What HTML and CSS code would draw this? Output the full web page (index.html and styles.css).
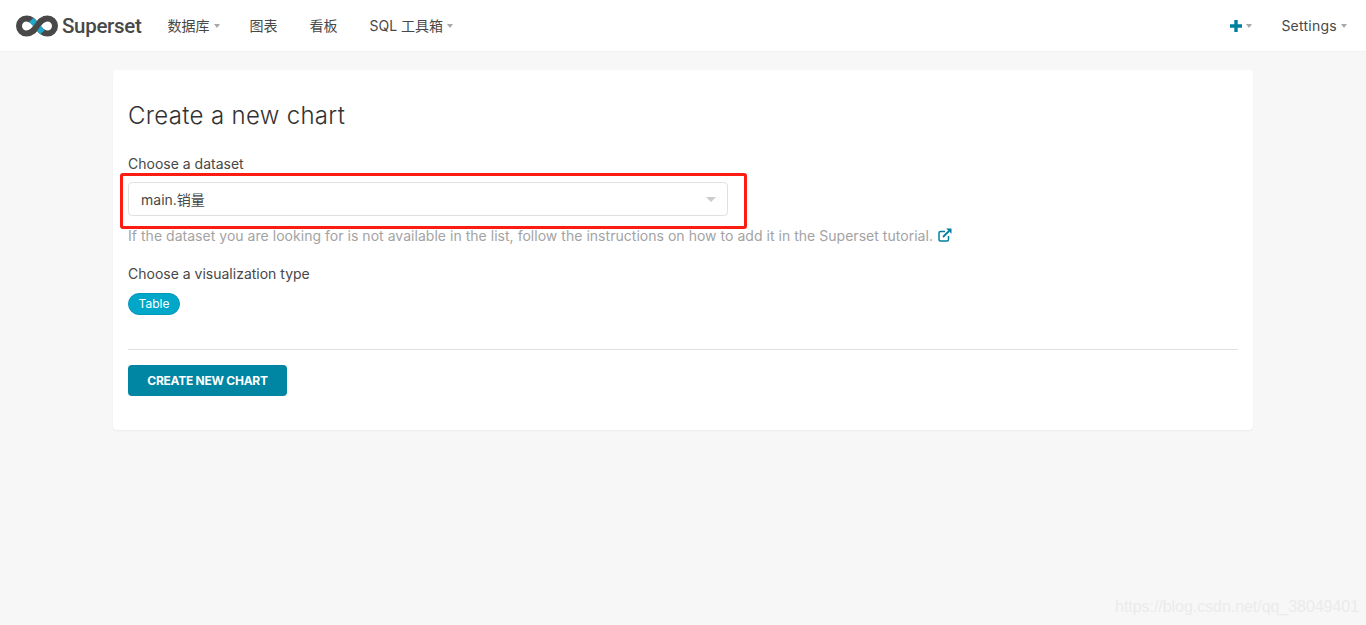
FILE: index.html
```html
<!DOCTYPE html>
<html lang="zh">
<head>
<meta charset="utf-8">
<title>Create a new chart</title>
<link rel="stylesheet" href="styles.css">
</head>
<body>
<header class="navbar">
  <a class="brand" href="#">
    <svg class="logo" width="42" height="22" viewBox="0 0 42 22" aria-hidden="true">
      <path d="M21 11 C17.500 6 15 3.500 10.500 3.500 A7.500 7.500 0 0 0 10.500 18.500 C15 18.500 17.500 16 21 11 C24.500 6 27 3.500 31.500 3.500 A7.500 7.500 0 0 1 31.500 18.500 C27 18.500 24.500 16 21 11 Z" fill="none" stroke="#484848" stroke-width="6"/>
      <path d="M15.500 4.800 L26.500 17.200" fill="none" stroke="#20a7c9" stroke-width="6"/>
      <path d="M16.500 17 L25.500 5" fill="none" stroke="#484848" stroke-width="6"/>
    </svg>
    <span class="brand-name">Superset</span>
  </a>
  <nav class="menu">
    <a class="menu-item" href="#">数据库<span class="caret"></span></a>
    <a class="menu-item" href="#">图表</a>
    <a class="menu-item" href="#">看板</a>
    <a class="menu-item" href="#">SQL 工具箱<span class="caret"></span></a>
  </nav>
  <nav class="menu-right">
    <a class="menu-item plus" href="#">
      <svg width="12" height="12" viewBox="0 0 12 12" aria-hidden="true"><path d="M0 6H12M6 0V12" stroke="#00809f" stroke-width="3.400"/></svg><span class="caret"></span>
    </a>
    <a class="menu-item settings" href="#">Settings<span class="caret"></span></a>
  </nav>
</header>

<main class="page">
  <section class="card">
    <h1 class="title">Create a new chart</h1>
    <div class="field">
      <label class="label">Choose a dataset</label>
      <div class="select">
        <span class="select-value">main.销量</span>
        <span class="select-arrow"></span>
        <div class="annotation"></div>
      </div>
      <p class="help">If the dataset you are looking for is not available in the list, follow the instructions on how to add it in the Superset tutorial.
        <svg class="ext" width="14" height="14" viewBox="0 0 14 14" aria-hidden="true">
          <path d="M10.500 8V11.500A1.500 1.500 0 0 1 9 13H2.500A1.500 1.500 0 0 1 1 11.500V5A1.500 1.500 0 0 1 2.500 3.500H7" fill="none" stroke="#00809f" stroke-width="1.500"/>
          <path d="M5 9L11 3" fill="none" stroke="#00809f" stroke-width="1.800"/>
          <path d="M8.200 0.500H13.500V5.800Z" fill="#00809f"/>
        </svg>
      </p>
    </div>
    <div class="field viz">
      <label class="label">Choose a visualization type</label>
      <div class="pill">Table</div>
    </div>
    <hr class="rule">
    <button class="btn" type="button">CREATE NEW CHART</button>
  </section>
</main>
<div class="watermark">https://blog.csdn.net/qq_38049401</div>
</body>
</html>
```
FILE: styles.css
```css
* { box-sizing: border-box; }
html, body { height: 100%; }
body {
  margin: 0;
  background: #f7f7f7;
  color: #484848;
  font-family: Inter, "Noto Sans CJK SC", sans-serif;
  font-size: 14px;
  line-height: 20px;
  overflow: hidden;
  position: relative;
}
a { color: inherit; text-decoration: none; }
.navbar {
  display: flex;
  align-items: center;
  height: 52px;
  background: #fff;
  border-bottom: 1px solid #f2f2f2;
  padding: 0 19px 0 16px;
}
.brand { display: flex; align-items: center; }
.logo { display: block; }
.brand-name {
  margin-left: 4px;
  font-size: 20.5px;
  font-weight: 500;
  font-family: Roboto, sans-serif;
  color: #484848;
  letter-spacing: -0.3px;
}
.menu { display: flex; gap: 32px; margin-left: 26px; }
.menu-right { display: flex; align-items: center; gap: 29px; margin-left: auto; }
.menu-item { display: flex; align-items: center; white-space: nowrap; color: #484848; }
.settings { letter-spacing: 0.25px; }
.caret {
  width: 0;
  height: 0;
  margin-left: 4px;
  margin-right: -2px;
  border-left: 3px solid transparent;
  border-right: 3px solid transparent;
  border-top: 4px solid #a8a8a8;
}
.menu-right .caret { margin-right: 0; }
.page { padding: 18px 113px 0; }
.card {
  height: 360px;
  background: #fff;
  border-radius: 4px;
  padding: 15px;
  box-shadow: 0 1px 2px rgba(0, 0, 0, 0.05);
}
.title {
  margin: 18px 0 0;
  font-size: 24px;
  line-height: 26px;
  font-weight: 300;
  letter-spacing: 0.32px;
  color: #323232;
}
.field { margin-top: 25px; }
.label { display: block; color: #484848; }
.select {
  position: relative;
  display: flex;
  align-items: center;
  justify-content: space-between;
  width: 600px;
  height: 34px;
  margin-top: 8px;
  padding: 0 12px;
  border: 1px solid #e0e0e0;
  border-radius: 4px;
  background: #fff;
}
.select-value { padding-top: 1px; }
.select-arrow {
  width: 0;
  height: 0;
  margin-right: -1px;
  border-left: 5px solid transparent;
  border-right: 5px solid transparent;
  border-top: 5px solid #ccc;
}
.annotation {
  position: absolute;
  left: -9px;
  top: -10px;
  width: 627px;
  height: 56px;
  border: 3px solid #fb1c12;
  border-radius: 3px;
  pointer-events: none;
}
.help {
  margin: 10px 0 0;
  color: #a3a3a3;
  letter-spacing: 0.03px;
}
.ext { vertical-align: -1px; margin-left: 1px; }
.viz { margin-top: 18px; }
.pill {
  width: 52px;
  height: 22px;
  margin-top: 9px;
  border: 1px solid #0098b8;
  border-radius: 11px;
  background: #00a7c9;
  color: #fff;
  font-size: 12px;
  line-height: 20px;
  text-align: center;
}
.rule {
  height: 1px;
  margin: 34px 0 15px;
  border: 0;
  background: #e0e0e0;
}
.btn {
  display: block;
  width: 159px;
  height: 31px;
  padding: 0 0 1px;
  border: 0;
  border-radius: 4px;
  background: #0085a3;
  color: #fff;
  font-family: inherit;
  font-size: 12px;
  font-weight: 700;
  letter-spacing: -0.25px;
}
.watermark {
  position: absolute;
  right: 7px;
  bottom: 8px;
  color: #ebebeb;
  font-family: "Liberation Sans", sans-serif;
  font-size: 16px;
  line-height: 20px;
  letter-spacing: -0.05px;
}
```
